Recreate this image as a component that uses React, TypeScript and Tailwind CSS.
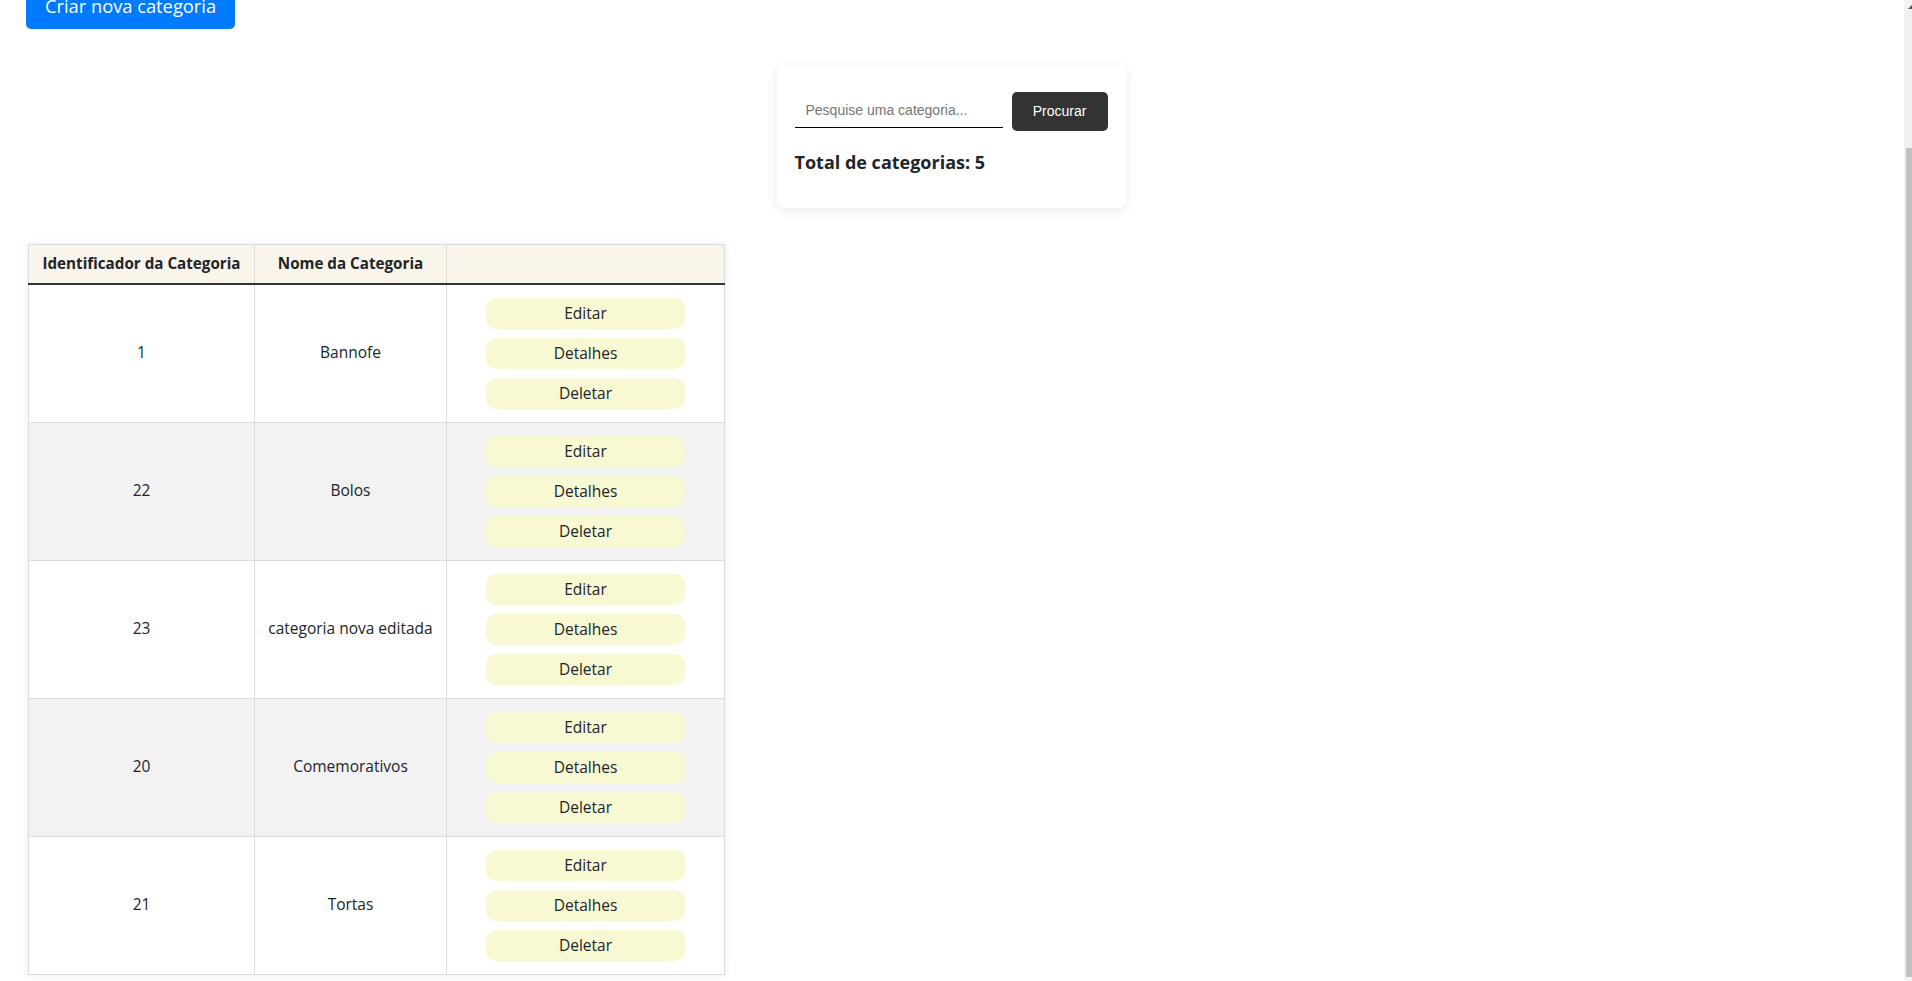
import React from 'react';

const categorias = [
  { id: 1, nome: 'Bannofe' },
  { id: 22, nome: 'Bolos' },
  { id: 23, nome: 'categoria nova editada' },
  { id: 20, nome: 'Comemorativos' },
  { id: 21, nome: 'Tortas' },
];

const acoes = ['Editar', 'Detalhes', 'Deletar'];

export default function App() {
  return (
    <div className="flex h-[981px] overflow-hidden bg-white text-[#212529] font-['Open_Sans',sans-serif]">
      <main className="flex-1 -mt-[17px]">
        {/* Topo */}
        <div className="pl-[26px]">
          <button className="w-[209px] py-[9px] leading-[28px] text-[18.3px] text-white bg-[#007bff] rounded-[5px] text-center">
            Criar nova categoria
          </button>
        </div>

        {/* Busca */}
        <div className="flex justify-center mt-[36px] pr-[2px]">
          <div className="w-[349px] h-[143px] rounded-[8px] bg-white shadow-[0_2px_12px_rgba(0,0,0,0.09)] pt-[27px] px-[18px]">
            <div className="flex items-start">
              <input
                placeholder="Pesquise uma categoria..."
                className="w-[208px] h-[36px] pl-[11px] border-b border-black outline-none text-[14px] font-['Liberation_Sans',Arial,sans-serif] placeholder:text-[#757575]"
              />
              <button className="ml-[9px] w-[96px] h-[39px] rounded-[5px] bg-[#333] text-white text-[14px] font-['Liberation_Sans',Arial,sans-serif]">
                Procurar
              </button>
            </div>
            <h2 className="mt-[17px] text-[18px] leading-[28px] font-bold text-[#212529]">
              Total de categorias: 5
            </h2>
          </div>
        </div>

        {/* Tabela */}
        <div className="pl-[28px] mt-[36px]">
          <table className="table-fixed w-[696px] border-collapse border border-[#dcdcdc] shadow-[0_0_8px_rgba(0,0,0,0.08)] text-[15.5px]">
            <colgroup>
              <col className="w-[226px]" />
              <col className="w-[192px]" />
              <col className="w-[278px]" />
            </colgroup>
            <thead>
              <tr className="bg-[#f9f5ea] border-b-2 border-[#333]">
                <th className="h-[39px] text-[15.2px] font-bold border-r border-[#dcdcdc]">Identificador da Categoria</th>
                <th className="h-[39px] text-[15.2px] font-bold border-r border-[#dcdcdc]">Nome da Categoria</th>
                <th className="h-[39px]"></th>
              </tr>
            </thead>
            <tbody>
              {categorias.map((c, i) => (
                <tr key={c.id} className={`border-b border-[#dcdcdc] ${i % 2 === 1 ? 'bg-[#f2f2f2]' : 'bg-white'}`}>
                  <td className="text-center border-r border-[#dcdcdc]">{c.id}</td>
                  <td className="text-center border-r border-[#dcdcdc]">{c.nome}</td>
                  <td className="py-[13px]">
                    <div className="flex flex-col items-center gap-[9px]">
                      {acoes.map((a) => (
                        <button
                          key={a}
                          className="w-[199px] h-[31px] rounded-[10px] bg-[#f8f8d3] text-[15.5px] leading-[31px] text-[#212529]"
                        >
                          {a}
                        </button>
                      ))}
                    </div>
                  </td>
                </tr>
              ))}
            </tbody>
          </table>
        </div>
      </main>

      {/* Barra de rolagem */}
      <aside className="w-[8px] bg-[#f1f1f1] flex flex-col">
        <div className="h-[148px] pt-[5px] pl-[4px]">
          <svg width="4" height="4" viewBox="0 0 4 4">
            <polygon points="0,4 4,0 4,4" fill="#505050" />
          </svg>
        </div>
        <div className="ml-[2px] flex-1 mb-[4px] bg-[#c1c1c1]" />
      </aside>
    </div>
  );
}
